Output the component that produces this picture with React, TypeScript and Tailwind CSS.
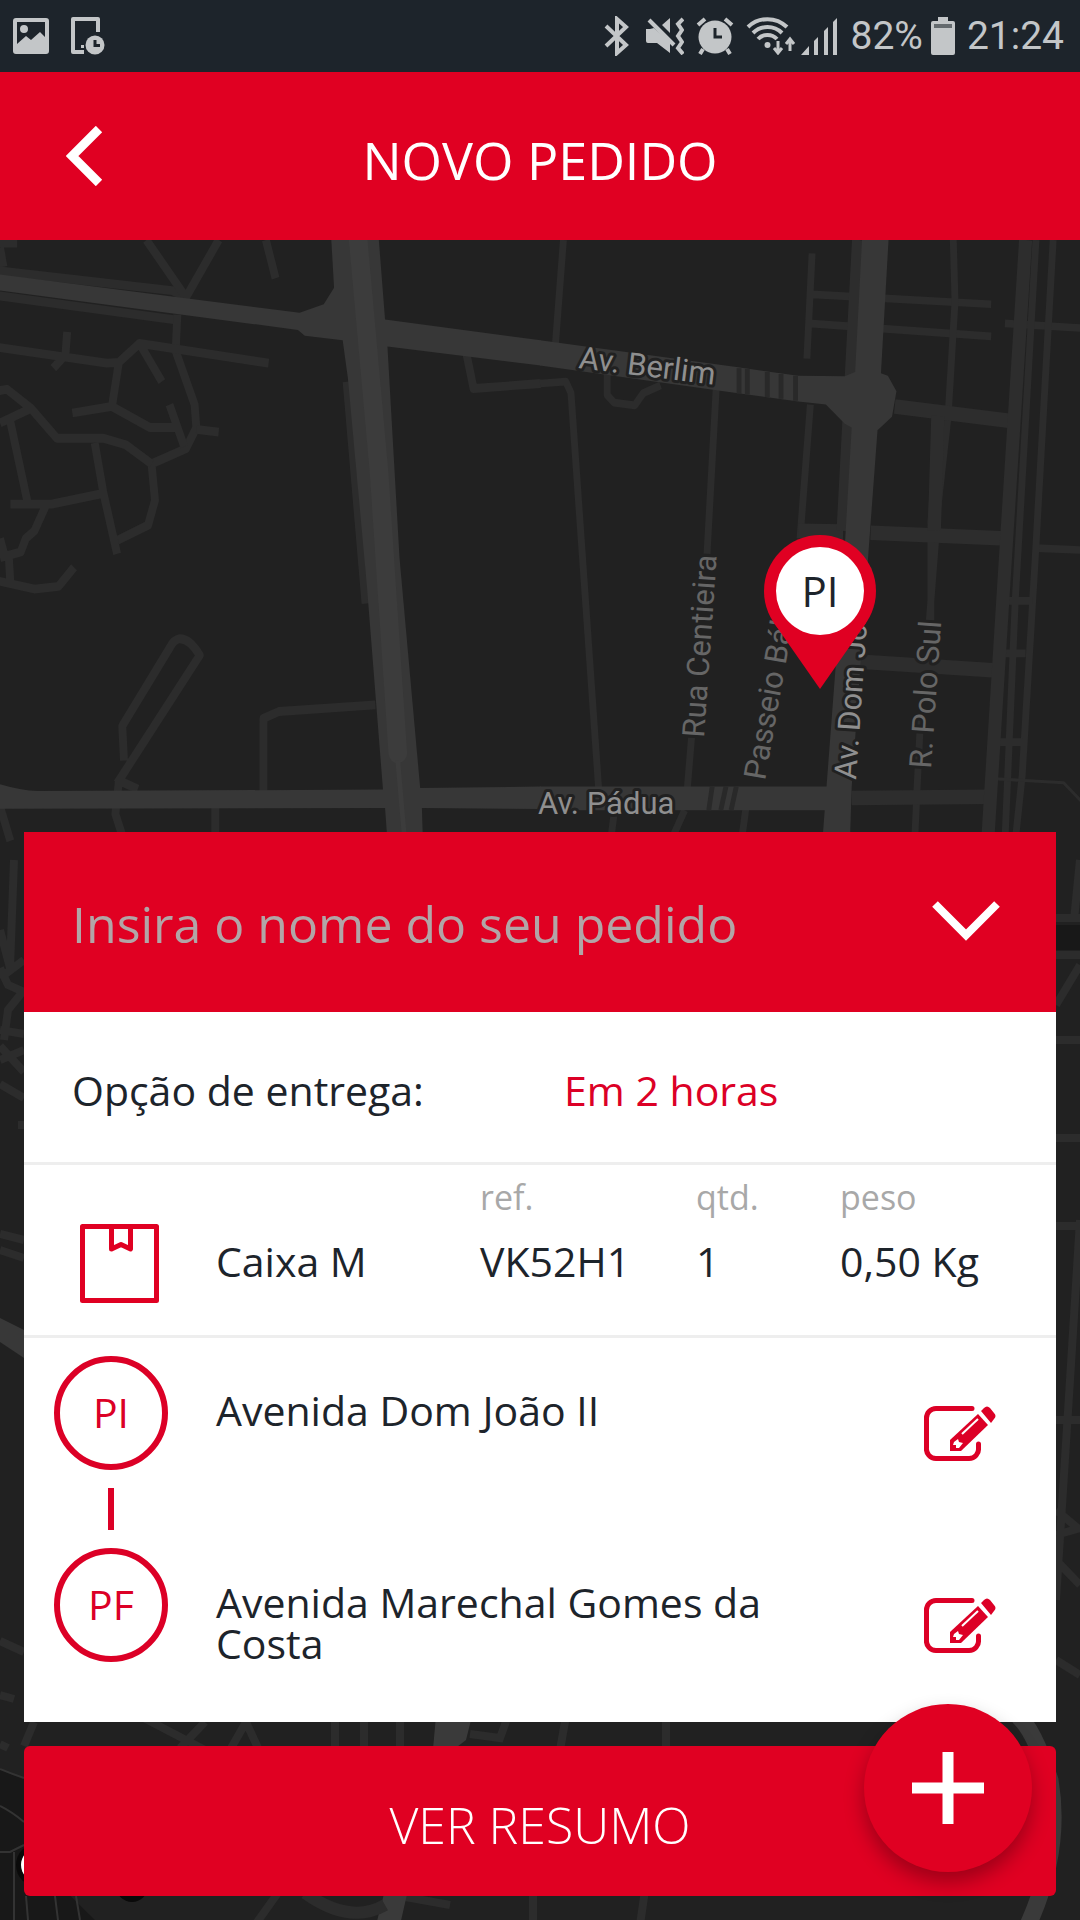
import type { ReactNode } from "react";

const FONT = "font-['Open_Sans',sans-serif]";

/* ---------- Status bar ---------- */

function StatusBar() {
  return (
    <div className="relative flex h-[72px] items-center justify-between bg-[#1d242b] pl-[13px] pr-4 text-[#c3c6c8]">
      <div className="flex items-center gap-[22px]">
        <svg width="36" height="36" viewBox="0 0 36 36" aria-label="Imagem">
          <path
            fill="currentColor"
            fillRule="evenodd"
            d="M3 0h30a3 3 0 0 1 3 3v30a3 3 0 0 1-3 3H3a3 3 0 0 1-3-3V3a3 3 0 0 1 3-3zM4 4v22l9-8 5 4 9-8 5 5V4zM11 7a4 4 0 1 1 0 8a4 4 0 0 1 0-8z"
          />
        </svg>
        <svg width="34" height="38" viewBox="0 0 34 38" aria-label="Dispositivo">
          <path d="M13 35H2V2h25v13" fill="none" stroke="currentColor" strokeWidth="4" strokeLinejoin="round" />
          <rect x="10" y="28" width="3" height="3" fill="currentColor" />
          <circle cx="24" cy="28" r="9.5" fill="currentColor" />
          <path d="M24 23v5.500h5" fill="none" stroke="#1d242b" strokeWidth="3" />
        </svg>
      </div>
      <div className="flex items-center">
        <svg width="26" height="40" viewBox="0 0 26 40" className="mr-4" aria-label="Bluetooth">
          <path
            d="M2 10l20 19-9 8V3l9 8L2 30"
            fill="none"
            stroke="currentColor"
            strokeWidth="4"
            strokeLinejoin="miter"
          />
        </svg>
        <svg width="38" height="38" viewBox="0 0 38 38" className="mr-3" aria-label="Silencioso">
          <path d="M0 12h8l5-1 11 12v13l-13-10H2a2 2 0 0 1-2-2zM24 1v15l-8-8z" fill="currentColor" />
          <path d="M3 3l26 28" stroke="#1d242b" strokeWidth="8" />
          <path d="M0 13l8-2 16 14v10L12 26H2z" fill="currentColor" />
          <path d="M3 3l25 25" stroke="currentColor" strokeWidth="4" />
          <path d="M37 2l-5 5 4 6-4 6 4 6-4 6 5 6" fill="none" stroke="currentColor" strokeWidth="4" />
        </svg>
        <svg width="38" height="38" viewBox="0 0 38 38" className="mr-3" aria-label="Alarme">
          <circle cx="19" cy="20" r="16.500" fill="currentColor" />
          <path d="M2 8l7-6M36 8l-7-6M7 32l-3 5M31 32l3 5" stroke="currentColor" strokeWidth="4" />
          <path d="M19 11v9h7" fill="none" stroke="#1d242b" strokeWidth="3" />
        </svg>
        <svg width="50" height="38" viewBox="0 0 50 38" className="mr-1" aria-label="Wi-Fi">
          <g fill="none" stroke="currentColor" strokeWidth="4">
            <path d="M2 10c11-10.500 28-10.500 39 0" />
            <path d="M7 16c8-8 21-8 29 0" />
            <path d="M12 22c5-5.500 14-5.500 19 0" />
          </g>
          <circle cx="21.500" cy="28" r="3" fill="currentColor" />
          <path d="M32 24v12M28 31l4 5 4-5M44 34V22M40 27l4-5 4 5" fill="none" stroke="currentColor" strokeWidth="3" />
        </svg>
        <svg width="38" height="38" viewBox="0 0 38 38" className="mr-3" aria-label="Sinal">
          <path d="M1 38h8V29zM14 38h4V20l-4 4zM24 38h4V10l-4 4zM33 38h4V1l-4 4z" fill="currentColor" />
        </svg>
        <span className="mr-2 font-[Roboto,sans-serif] text-[39px] leading-none">82%</span>
        <svg width="24" height="38" viewBox="0 0 24 38" className="mr-3" aria-label="Bateria">
          <path
            d="M7 0h10v4h5a2 2 0 0 1 2 2v30a2 2 0 0 1-2 2H2a2 2 0 0 1-2-2V6a2 2 0 0 1 2-2h5z"
            fill="currentColor"
          />
          <path d="M3 7h18v4H3z" fill="#646a6e" />
        </svg>
        <span className="font-[Roboto,sans-serif] text-[39px] leading-none">21:24</span>
      </div>
    </div>
  );
}

/* ---------- Map ---------- */

const westMinor = [
  "M-10 8h60M0 20l10 50",
  "M-10 80L500 132L540 150",
  "M-10 145L520 210",
  "M425 0L540 150L635 0",
  "M772 0L800 100",
  "M515 195L510 290L565 430L570 490L540 545L440 585L450 680L430 745L340 785",
  "M195 240L190 300L155 335M-10 280L310 322L345 320L405 270L780 322M405 270L470 370M345 320L325 435L210 452M325 435L435 490L515 490M492 430L535 540M570 495L635 502",
  "M-10 395L20 390L90 440L165 518L300 518L365 535L440 585M90 440L0 478M30 475L80 685",
  "M275 530L300 660L340 820M30 690L150 690L300 662M135 690L100 760L75 780L60 815L0 830M25 820L30 895M-10 890L100 912L170 905L215 855M0 780L15 830",
  "M340 1420L580 1085Q550 1040 520 1042Q505 1045 495 1062L355 1270L360 1360M345 1415L335 1500L360 1570M340 1410L400 1435",
  "M765 1440V1250L810 1232L1090 1215M625 1470V1570M0 1480L30 1570",
  "M1355 300L1375 388L1570 375",
];

const eastMinor = [
  "M68 0L45 270M0 375L75 370L90 400L170 1430",
  "M195 350V405L215 425L275 432L300 400L350 380",
  "M512 380L485 820M440 1300L428 1430",
  "M790 35L775 310M790 142L1310 168M780 218L1310 252M785 430L755 780",
  "M1200 0L1205 160L1185 460L1150 740M1155 460L1135 740V1000M1150 770L1130 1000",
  "M1105 1250L1095 1430L1088 1570M1350 218L1570 230M1440 805L1570 810",
  "M1440 0L1380 940L1350 1570M1490 0L1440 800L1400 1400L1380 1570",
  "M1360 943H1430M1350 1080H1410M1330 1312H1400M215 1500L205 1570M420 1490L380 1570M600 1470L585 1570",
];

const eastMedium = [
  "M1030 435L1385 475",
  "M750 760L880 762M960 765L1355 780",
  "M900 1100L1325 1125",
  "M905 1458L1310 1455",
  "M1410 0L1355 780L1300 1570",
  "M925 0L880 760",
  "M1155 460L1145 760",
];

const lowerRoads = [
  "M0 930L10 968L14 860M0 978L24 960M0 968L8 985L24 992M24 990L8 1010L4 1040M0 1030L24 1034M0 1046L24 1072M0 1060L24 1050M24 1125H18M0 1084L24 1098",
  "M0 1234L24 1240M0 1250L24 1258M0 1641L24 1652M0 1695L14 1699M0 1744L8 1748",
  "M34 1722L24 1746M140 1716L205 1750M205 1722L180 1748M230 1750L246 1722L258 1748M335 1716V1750M364 1716V1750M400 1716V1750M470 1734L500 1738L508 1716",
  "M566 1716L560 1750M666 1716V1750M645 1890L640 1925M280 1890L255 1925M400 1896L450 1905M533 1890V1925",
  "M1080 860L1074 920M1056 918H1080M1056 955H1080M1056 1005L1080 965M1056 1040H1080M1056 1138H1080M1056 1226H1080M1056 1420H1080M1056 1510L1080 1530M1056 1535L1080 1528M1056 1560L1080 1585M1056 1660L1080 1675M1080 1220L1070 1380L1056 1600",
];

type LabelProps = { x: number; y: number; angle: number; major?: boolean; children: ReactNode };

function StreetLabel({ x, y, angle, major = false, children }: LabelProps) {
  return (
    <text
      transform={`translate(${x} ${y}) rotate(${angle})`}
      fontSize="31"
      fill={major ? "#8f8f8f" : "#666666"}
      stroke="#212121"
      strokeWidth="6"
      strokeLinejoin="round"
      paintOrder="stroke"
      className="font-[Roboto,sans-serif]"
    >
      {children}
    </text>
  );
}

function CityMap() {
  return (
    <svg
      className="absolute inset-0 h-full w-full"
      viewBox="0 240 1080 1680"
      preserveAspectRatio="xMidYMin slice"
      role="img"
      aria-label="Mapa"
    >
      <rect y="240" width="1080" height="1680" fill="#212121" />
      <path d="M0 1768L24 1778L24 1850L100 1925H0z" fill="#181818" />
      <path d="M1056 925H1080V950H1056z" fill="#181818" />
      <g fill="none" stroke="#2c2c2c" strokeWidth="8">
        {lowerRoads.map((d) => (
          <path key={d} d={d} />
        ))}
      </g>
      <path
        d="M0 1769Q12 1774 24 1778M0 1806Q12 1812 24 1822M0 1852H10L24 1845M14 1852V1920M26 1896L28 1920M55 1896L58 1920M76 1896L80 1920"
        fill="none"
        stroke="#333333"
        strokeWidth="2"
      />
      <path d="M0 1318L24 1330V1358L0 1342z" fill="#383838" />
      <path d="M436 1716H472L466 1740L440 1760H432z" fill="#3a3a3a" />
      <path d="M385 1890L408 1890L400 1925H376z" fill="#3a3a3a" />
      <path d="M305 1893Q350 1925 385 1905" fill="none" stroke="#2c2c2c" strokeWidth="12" />
      <path d="M1018 1716Q1034 1730 1050 1780Q1062 1850 1028 1925" fill="none" stroke="#3a3a3a" strokeWidth="17" />
      <circle cx="38" cy="1865" r="22" fill="#0a0a0a" />
      <circle cx="38" cy="1865" r="17" fill="#ffffff" />
      <circle cx="132" cy="1886" r="16" fill="#0a0a0a" />

      <g transform="translate(0 240) scale(0.3444 0.3827)">
        <g fill="none" stroke="#2c2c2c" strokeWidth="23" strokeLinejoin="round">
          {westMinor.map((d) => (
            <path key={d} d={d} />
          ))}
          <path d="M1010 370L1065 950" strokeWidth="30" />
        </g>
        <path
          d="M0 90L870 190L940 168L970 125L962 0H1100L1118 208L1570 262V328L1125 278L1160 830L1220 1432L1570 1428V1487L1225 1484L1228 1570H1125L1118 1484L0 1486V1422Q60 1438 110 1440L1112 1436L1065 900L1010 360L995 262L885 250L865 235L0 132z"
          fill="#373737"
        />
        <path d="M1040 0L1100 600L1155 1340" fill="none" stroke="#3c3c3c" strokeWidth="54" strokeLinecap="round" />
        <path d="M1155 1360L1175 1570" fill="none" stroke="#3c3c3c" strokeWidth="14" />
      </g>

      <g transform="translate(540 240) scale(0.3444 0.3827)">
        <g fill="none" stroke="#2c2c2c" strokeWidth="20" strokeLinejoin="round">
          {eastMinor.map((d) => (
            <path key={d} d={d} />
          ))}
          <path d="M1320 1408L1520 1418L1570 1465" strokeWidth="8" />
        </g>
        <g fill="none" stroke="#2d2d2d" strokeWidth="38">
          {eastMedium.map((d) => (
            <path key={d} d={d} />
          ))}
        </g>
        <path
          d="M0 262L570 332L750 355L885 356L915 345L935 0H1012L990 348L1010 355L1035 395L1022 462L980 497L955 800L905 1430L900 1570H820L885 800L905 490L885 480L830 430L750 422L570 400L0 328zM0 1428H840V1490H0z"
          fill="#373737"
        />
        <path
          d="M578 335V402M602 337V404M660 345V410M700 350V415M742 355V420M500 1428L490 1490M540 1428L525 1490M570 1428L555 1490"
          stroke="#292929"
          strokeWidth="14"
        />
      </g>

      <StreetLabel x={578} y={368} angle={7} major>Av. Berlim</StreetLabel>
      <StreetLabel x={538} y={814} angle={0} major>Av. Pádua</StreetLabel>
      <StreetLabel x={704} y={738} angle={-86}>Rua Centieira</StreetLabel>
      <StreetLabel x={765} y={781} angle={-80}>Passeio Báltico</StreetLabel>
      <StreetLabel x={856} y={780} angle={-86} major>Av. Dom João II</StreetLabel>
      <StreetLabel x={931} y={769} angle={-86}>R. Polo Sul</StreetLabel>

      <circle cx="820" cy="591" r="56" fill="#e00022" />
      <path d="M774 623L820 689L866 623z" fill="#e00022" />
      <circle cx="820" cy="591" r="44" fill="#ffffff" />
      <text x="820" y="607" fontSize="42" textAnchor="middle" fill="#1d242b" className={FONT}>
        PI
      </text>
    </svg>
  );
}

/* ---------- Order card ---------- */

function EditIcon() {
  return (
    <svg width="72" height="56" viewBox="0 0 72 56" aria-hidden="true">
      <path
        d="M48 2.500H12A9.500 9.500 0 0 0 2.500 12v30A9.500 9.500 0 0 0 12 52.500h33A9.500 9.500 0 0 0 54.500 42v-4"
        fill="none"
        stroke="#dc0026"
        strokeWidth="5"
        strokeLinecap="round"
      />
      <path d="M26 34L54 8l10 11-27 26H26z" fill="#dc0026" />
      <path d="M57 5l3-3q3-3 6 0l4 5q3 3 0 6l-3 4z" fill="#dc0026" />
      <path d="M38 28L54 13" stroke="#ffffff" strokeWidth="2" />
      <path d="M30 36l4-3 1 3 4 1-4 5h-3v-3h-3z" fill="#ffffff" />
    </svg>
  );
}

function BoxIcon() {
  return (
    <svg width="79" height="79" viewBox="0 0 79 79" aria-hidden="true">
      <g fill="none" stroke="#e00022" strokeWidth="5" strokeLinejoin="round">
        <rect x="2.500" y="2.500" width="74" height="74" />
        <path d="M31.500 3v22l9.500-4.500L50.500 25V3" />
      </g>
    </svg>
  );
}

function Stop({ code, address }: { code: string; address: string }) {
  return (
    <li className="flex items-start">
      <span className="flex size-[114px] shrink-0 items-center justify-center rounded-full border-[6px] border-[#dc0026] text-[41px] text-[#dc0026]">
        {code}
      </span>
      <p className="ml-12 mt-[34px] max-w-[600px] flex-1 text-[41px] leading-[41px]">{address}</p>
      <button type="button" aria-label={`Editar ${address}`} className="ml-auto mr-9 mt-[50px]">
        <EditIcon />
      </button>
    </li>
  );
}

function OrderCard() {
  return (
    <section className="bg-white text-[#1d242b]">
      <div className="flex h-[180px] items-center bg-[#e00022] pl-12 pr-14">
        <input
          type="text"
          aria-label="Nome do pedido"
          placeholder="Insira o nome do seu pedido"
          className="min-w-0 flex-1 bg-transparent pt-1 text-[50px] text-white outline-none placeholder:text-[#b2a5a7] placeholder:opacity-100"
        />
        <button type="button" aria-label="Recolher">
          <svg width="68" height="42" viewBox="0 0 68 42" aria-hidden="true">
            <path d="M3 3l31 31L65 3" fill="none" stroke="#ffffff" strokeWidth="8" />
          </svg>
        </button>
      </div>

      <div className="flex h-[153px] items-center border-b-[3px] border-[#eeeeee] pl-12 pt-2 text-[41px]">
        <span className="w-1/2">Opção de entrega:</span>
        <span className="text-[#dc0026]">Em 2 horas</span>
      </div>

      <div className="h-[173px] border-b-[3px] border-[#eeeeee]">
        <table className="w-full table-fixed text-left">
          <colgroup>
            <col className="w-[192px]" />
            <col className="w-[264px]" />
            <col className="w-[216px]" />
            <col className="w-[144px]" />
            <col />
          </colgroup>
          <thead>
            <tr className="h-[59px] align-bottom text-[34px] leading-[54px] text-[#a8a8a8]">
              <td />
              <td />
              <th scope="col" className="font-normal">ref.</th>
              <th scope="col" className="font-normal">qtd.</th>
              <th scope="col" className="font-normal">peso</th>
            </tr>
          </thead>
          <tbody>
            <tr className="text-[41px] leading-[75px]">
              <td className="pl-14"><BoxIcon /></td>
              <td className="pb-1">Caixa M</td>
              <td className="pb-1">VK52H1</td>
              <td className="pb-1">1</td>
              <td className="pb-1">0,50 Kg</td>
            </tr>
          </tbody>
        </table>
      </div>

      <ul className="pb-[58px] pl-[30px] pr-6 pt-[18px]">
        <Stop code="PI" address="Avenida Dom João II" />
        <li aria-hidden="true" className="my-[18px] ml-[54px] h-[42px] w-[6px] bg-[#dc0026]" />
        <Stop code="PF" address="Avenida Marechal Gomes da Costa" />
      </ul>
    </section>
  );
}

export default function App() {
  return (
    <div className={`flex min-h-screen flex-col ${FONT}`}>
      <StatusBar />

      <header className="grid h-[168px] grid-cols-[1fr_auto_1fr] items-center bg-[#e00022] text-white">
        <button type="button" aria-label="Voltar" className="ml-[66px] w-fit">
          <svg width="37" height="60" viewBox="0 0 37 60" aria-hidden="true">
            <path d="M33 3L6 30l27 27" fill="none" stroke="#ffffff" strokeWidth="9" />
          </svg>
        </button>
        <h1 className="pt-2 text-[52px] leading-none">NOVO PEDIDO</h1>
      </header>

      <main className="relative flex flex-1 flex-col justify-end overflow-hidden pt-[592px]">
        <CityMap />
        <div className="relative flex flex-col gap-6 px-6 pb-6">
          <OrderCard />
          <button
            type="button"
            className="h-[150px] rounded-md bg-[#e00022] pt-2 text-[50px] font-light text-white"
          >
            VER RESUMO
          </button>
          <button
            type="button"
            aria-label="Adicionar"
            className="absolute bottom-12 right-12 flex size-[168px] items-center justify-center rounded-full bg-[#e00022] shadow-[0_10px_20px_rgba(0,0,0,0.3)]"
          >
            <svg width="72" height="72" viewBox="0 0 72 72" aria-hidden="true">
              <path d="M36 0v72M0 36h72" stroke="#ffffff" strokeWidth="11" />
            </svg>
          </button>
        </div>
      </main>
    </div>
  );
}
